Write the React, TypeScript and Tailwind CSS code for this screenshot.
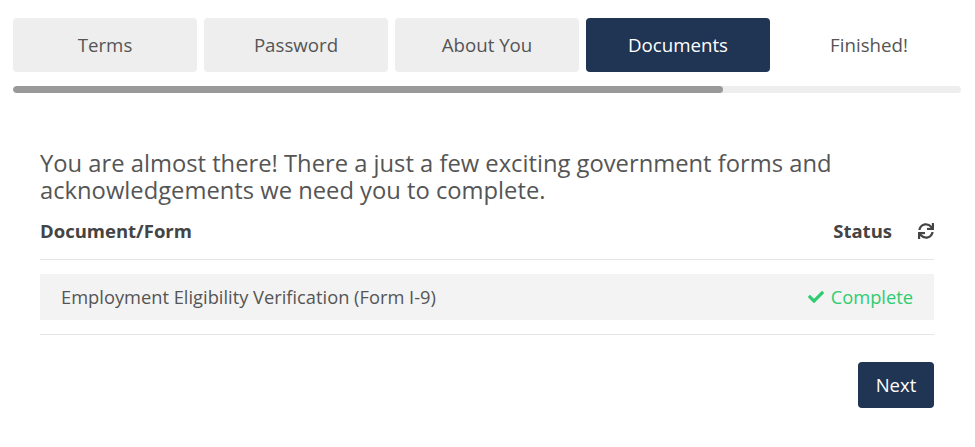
import React from "react";
import { FaCheck, FaSync } from "react-icons/fa";

const tabs = ["Terms", "Password", "About You", "Documents", "Finished!"];

export default function App() {
  return (
    <div className="w-[975px] h-[447px] bg-white pl-[13px] pr-[14px] pt-[18px]" style={{ fontFamily: '"Open Sans", sans-serif' }}>
      <div className="flex gap-[7px]">
        {tabs.map((t, i) => (
          <div
            key={t}
            className={
              i === 3
                ? "flex-1 h-[54px] rounded-[4px] bg-[#203453] text-white flex items-center justify-center text-[18.7px]"
                : i === 4
                ? "flex-1 h-[54px] rounded-[4px] text-[#555] flex items-center justify-center text-[18.7px]"
                : "flex-1 h-[54px] rounded-[4px] bg-[#eeeeee] text-[#555] flex items-center justify-center text-[18.7px]"
            }
          >
            {t}
          </div>
        ))}
      </div>
      <div className="mt-[14px] h-[7px] rounded-full bg-[#eeeeee] overflow-hidden">
        <div className="h-full w-[710px] rounded-full bg-[#999999]" />
      </div>
      <div className="px-[27px]">
        <p className="mt-[57px] text-[23.75px] leading-[27px] text-[#555]">
          You are almost there! There a just a few exciting government forms and acknowledgements we need you to complete.
        </p>
        <div className="mt-[15px] flex items-center justify-between pb-[16px] border-b border-[#e5e5e5] text-[18.5px] leading-[24px] font-bold text-[#444]">
          <span>Document/Form</span>
          <div className="flex items-center gap-[26px]">
            <span>Status</span>
            <FaSync className="w-[16px] h-[16px] text-[#444]" />
          </div>
        </div>
        <div className="mt-[14px] h-[46px] bg-[#f3f3f3] flex items-center justify-between px-[21px] text-[18.3px] text-[#555]">
          <span>Employment Eligibility Verification (Form I-9)</span>
          <span className="flex items-center gap-[7px] text-[#2ecc71]">
            <FaCheck className="w-[16px] h-[16px]" />
            Complete
          </span>
        </div>
        <div className="mt-[14px] border-b border-[#e5e5e5]" />
        <div className="mt-[27px] flex justify-end">
          <button className="w-[76px] h-[46px] rounded-[4px] bg-[#203453] text-white text-[18.5px]">Next</button>
        </div>
      </div>
    </div>
  );
}
